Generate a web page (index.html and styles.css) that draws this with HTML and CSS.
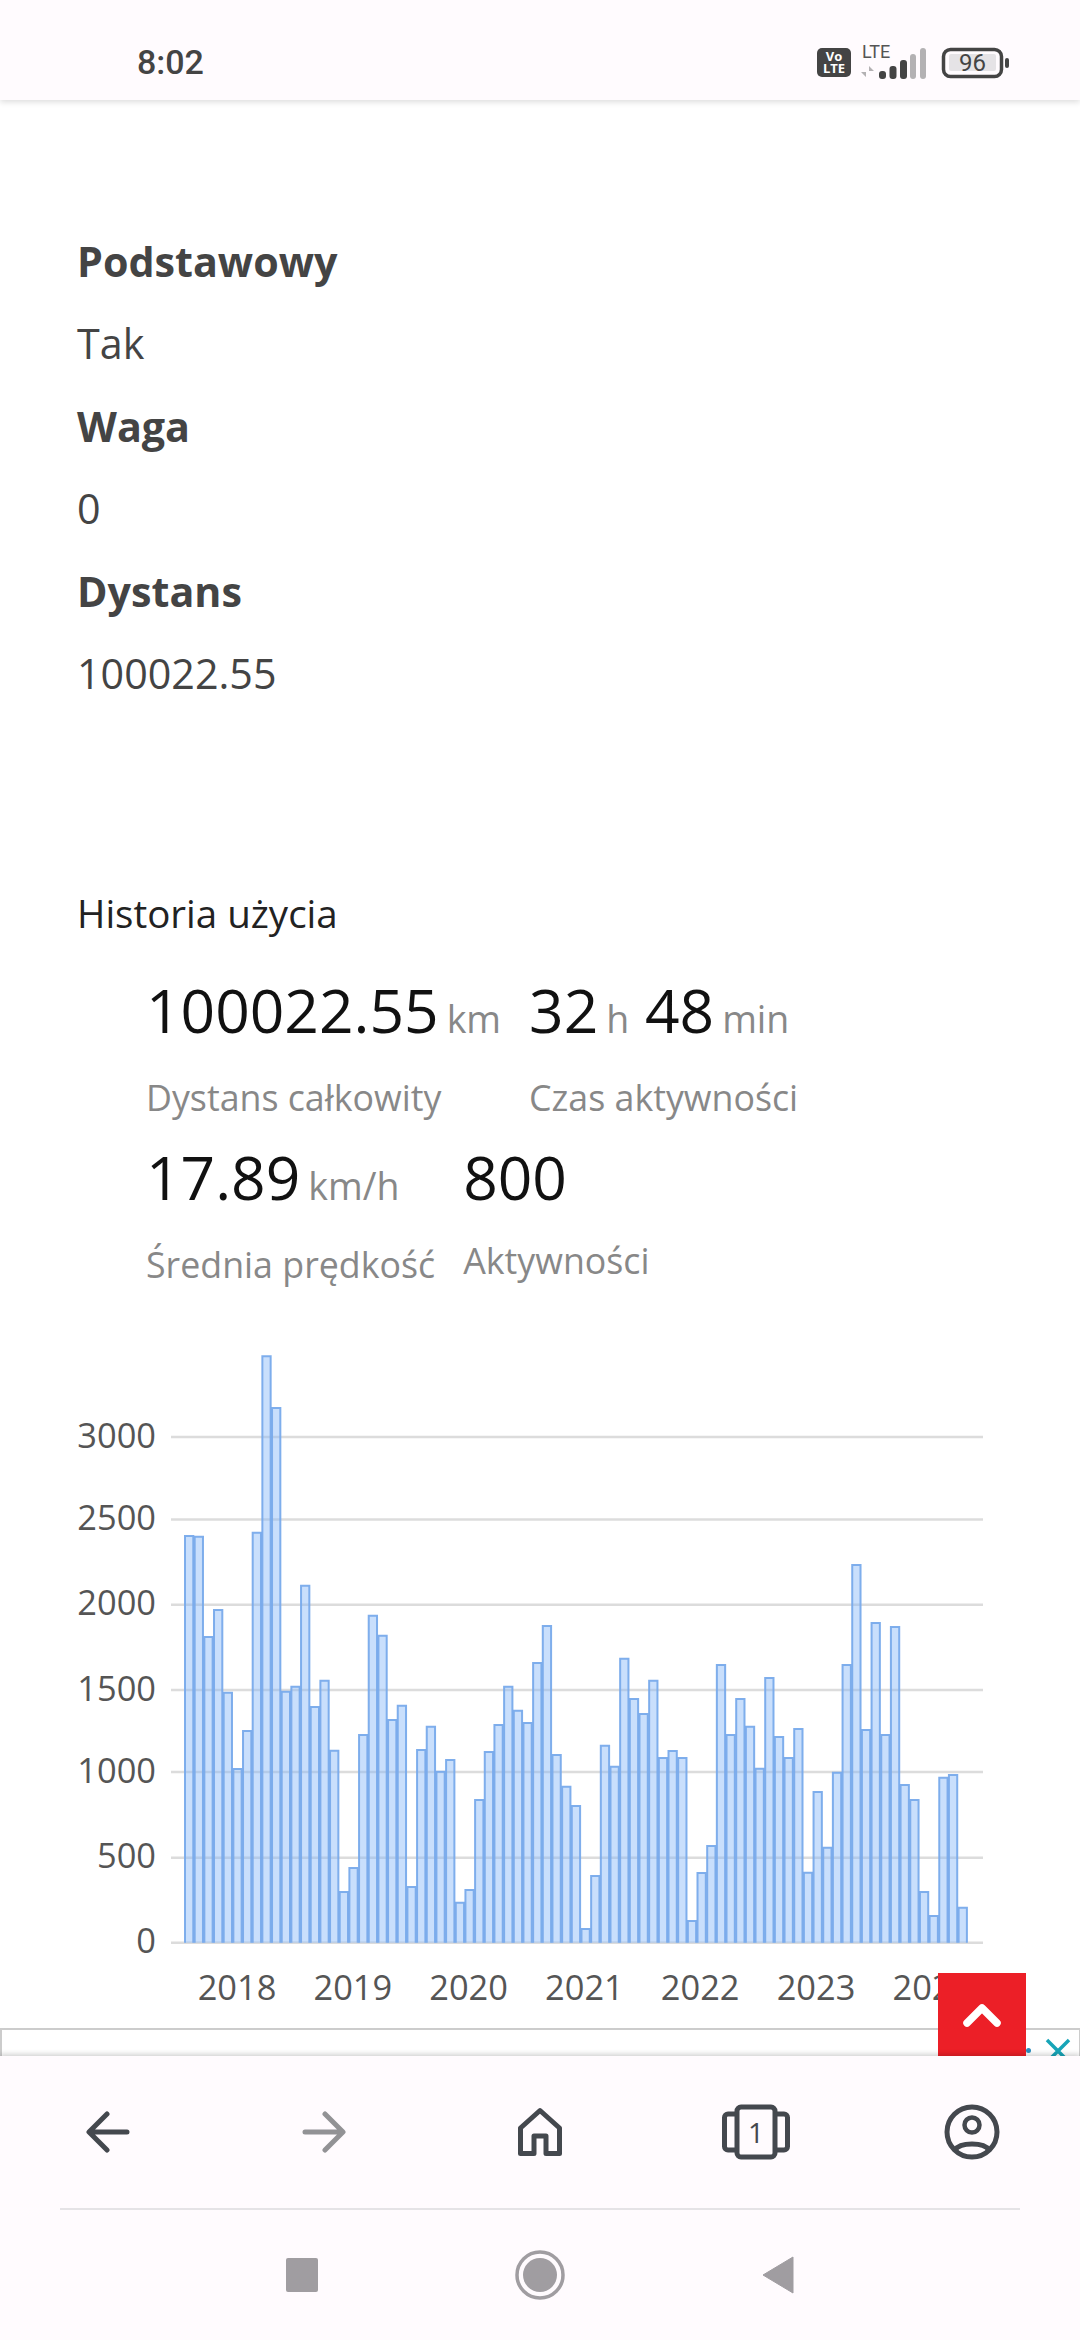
FILE: index.html
```html
<!DOCTYPE html>
<html lang="pl">
<head>
  <meta charset="UTF-8">
  <meta name="viewport" content="width=device-width, initial-scale=1.0">
  <title>Historia użycia</title>
  <link rel="stylesheet" href="styles.css">
</head>
<body>
  <div class="screen">
    <header class="statusbar">
      <span class="clock">8:02</span>
      <svg class="status-icons" width="206" height="42" viewBox="0 -6 206 42">
        <rect x="0" y="2" width="34" height="29" rx="5" fill="#444"/>
        <text x="17" y="14.500" class="volte">Vo</text>
        <text x="17" y="27" class="volte">LTE</text>
        <text x="45" y="12" class="lte">LTE</text>
        <path d="M49 20v11l-5-5h5zM52 31V20l5 5h-5z" fill="#b3b1b3"/>
        <rect x="62" y="25" width="7" height="8" rx="3" fill="#444"/>
        <rect x="72.500" y="20" width="7" height="13" rx="3" fill="#444"/>
        <rect x="83" y="14" width="7" height="19" rx="3" fill="#444"/>
        <rect x="93" y="8" width="6" height="25" rx="3" fill="#b3b1b3"/>
        <rect x="103" y="2" width="6" height="31" rx="3" fill="#b3b1b3"/>
        <rect x="126.500" y="3.500" width="58" height="27" rx="7" fill="none" stroke="#444" stroke-width="3.500"/>
        <rect x="132" y="8" width="47" height="17" rx="2" fill="#e5e3e6"/>
        <text x="155.500" y="25" class="batt">96</text>
        <rect x="188" y="12" width="4" height="10" rx="2" fill="#444"/>
      </svg>
    </header>

    <main class="content">
      <dl class="details">
        <dt>Podstawowy</dt>
        <dd>Tak</dd>
        <dt>Waga</dt>
        <dd>0</dd>
        <dt>Dystans</dt>
        <dd>100022.55</dd>
      </dl>

      <h2 class="section-title">Historia użycia</h2>

      <div class="stats">
        <div class="stat">
          <div class="stat-value">100022.55<small>km</small></div>
          <div class="stat-label">Dystans całkowity</div>
        </div>
        <div class="stat">
          <div class="stat-value">32<small>h</small> 48<small>min</small></div>
          <div class="stat-label">Czas aktywności</div>
        </div>
        <div class="stat">
          <div class="stat-value">17.89<small>km/h</small></div>
          <div class="stat-label">Średnia prędkość</div>
        </div>
        <div class="stat stat-plain">
          <div class="stat-value">800</div>
          <div class="stat-label">Aktywności</div>
        </div>
      </div>

      <svg id="chart" class="chart" width="1080" height="680" viewBox="0 1340 1080 680"></svg>

      <div class="ad-banner">
        <span class="ad-dot"></span>
        <svg class="ad-close" width="26" height="26" viewBox="0 0 26 26">
          <path d="M2 2l22 22M24 2L2 24" stroke="#17a5b8" stroke-width="3.500" fill="none"/>
        </svg>
      </div>

      <button class="to-top" aria-label="Do góry">
        <svg width="44" height="30" viewBox="0 0 44 30">
          <path d="M7 22L22 7l15 15" stroke="#fff" stroke-width="7.500" stroke-linecap="round" stroke-linejoin="round" fill="none"/>
        </svg>
      </button>
    </main>

    <footer class="bottom">
      <nav class="toolbar">
        <div class="tool">
          <svg width="44" height="42" viewBox="0 0 44 42">
            <path d="M41 21H4M21 3L3 21l18 18" stroke="#44484e" stroke-width="5" stroke-linecap="round" stroke-linejoin="round" fill="none"/>
          </svg>
        </div>
        <div class="tool">
          <svg width="44" height="42" viewBox="0 0 44 42">
            <path d="M3 21h37M23 3l18 18-18 18" stroke="#929295" stroke-width="5" stroke-linecap="round" stroke-linejoin="round" fill="none"/>
          </svg>
        </div>
        <div class="tool">
          <svg width="46" height="50" viewBox="0 0 46 50">
            <path d="M3.500 21L23 3.500 42.500 21v25.500H29V29H17v17.500H3.500z" stroke="#44484e" stroke-width="5" stroke-linejoin="round" fill="none"/>
          </svg>
        </div>
        <div class="tool">
          <svg width="68" height="56" viewBox="0 0 68 56">
            <rect x="15" y="3" width="38" height="50" rx="4" stroke="#44484e" stroke-width="5" fill="none"/>
            <path d="M15 10H6a3.500 3.500 0 0 0-3.500 3.500v29A3.500 3.500 0 0 0 6 46h9M53 10h9a3.500 3.500 0 0 1 3.500 3.500v29A3.500 3.500 0 0 1 62 46h-9" stroke="#44484e" stroke-width="5" fill="none"/>
            <text x="34" y="39" class="tab-count">1</text>
          </svg>
        </div>
        <div class="tool">
          <svg width="56" height="56" viewBox="0 0 56 56">
            <circle cx="28" cy="28" r="25" stroke="#44484e" stroke-width="5" fill="none"/>
            <circle cx="28" cy="21" r="7.500" stroke="#44484e" stroke-width="4.500" fill="none"/>
            <path d="M11 46c5-8 29-8 34 0" stroke="#44484e" stroke-width="5" fill="none"/>
          </svg>
        </div>
      </nav>
      <div class="sysnav">
        <svg width="32" height="34" viewBox="0 0 32 34"><rect width="32" height="34" rx="2" fill="#a09da1"/></svg>
        <svg width="50" height="50" viewBox="0 0 50 50">
          <circle cx="25" cy="25" r="23" stroke="#a09da1" stroke-width="3.500" fill="none"/>
          <circle cx="25" cy="25" r="17" fill="#a09da1"/>
        </svg>
        <svg width="32" height="38" viewBox="0 0 32 38"><path d="M31 1v36L1 19z" fill="#a09da1" stroke="#a09da1" stroke-linejoin="round"/></svg>
      </div>
    </footer>
  </div>
  <script src="script.js"></script>
</body>
</html>
```

FILE: styles.css
```css
* {
  box-sizing: border-box;
}
html, body {
  margin: 0;
  padding: 0;
}
body {
  font-family: 'Open Sans', 'Liberation Sans', sans-serif;
  background: #fff;
}
.screen {
  width: 1080px;
  height: 2340px;
  display: flex;
  flex-direction: column;
  overflow: hidden;
}

.statusbar {
  height: 100px;
  flex: none;
  display: flex;
  align-items: center;
  justify-content: space-between;
  padding: 24px 57px 0 137px;
  background: #fffbfe;
  box-shadow: 0 2px 6px rgba(0, 0, 0, 0.14);
  position: relative;
  z-index: 2;
}
.clock {
  font-family: Roboto, sans-serif;
  font-weight: 500;
  font-size: 34px;
  color: #444;
}
.status-icons {
  margin-top: -2px;
}
.volte {
  font: 700 13px 'Open Sans', sans-serif;
  fill: #fff;
  text-anchor: middle;
}
.lte {
  font: 400 18px Roboto, sans-serif;
  fill: #555;
}
.batt {
  font: 400 24px Roboto, sans-serif;
  fill: #444;
  text-anchor: middle;
}
.tab-count {
  font: 400 28px 'Open Sans', sans-serif;
  fill: #44484e;
  text-anchor: middle;
}

.content {
  flex: 1;
  position: relative;
  overflow: hidden;
  padding-top: 119.500px;
}
.details {
  margin: 0 0 0 77px;
  font-size: 41.250px;
  line-height: 82.500px;
  color: #444;
}
.details dt {
  font-weight: 700;
}
.details dd {
  margin: 0;
}
.section-title {
  margin: 157px 0 0 77px;
  font-size: 38.500px;
  line-height: 82px;
  font-weight: 400;
  color: #222;
}

.stats {
  display: flex;
  flex-wrap: wrap;
  column-gap: 28px;
  margin-left: 146px;
  height: 386px;
  align-content: flex-start;
}
.stat {
  height: 167px;
}
.stat-value {
  font-size: 60.500px;
  line-height: 92px;
  padding-top: 10px;
  color: #111;
  white-space: nowrap;
}
.stat-value small {
  font-size: 37.500px;
  color: #888;
  margin-left: 8px;
}
.stat-label {
  font-size: 35.750px;
  line-height: 56px;
  margin-top: 4px;
  color: #888;
  white-space: nowrap;
}
.stat-plain .stat-label {
  margin-top: 9px;
}

.chart {
  display: block;
  position: absolute;
  left: 0;
  top: 1240px;
}
.grid-line {
  stroke: #dcdcdc;
  stroke-width: 2.500;
}
.axis-text {
  font: 400 34.400px 'Open Sans', sans-serif;
  fill: #555;
}
.axis-y {
  text-anchor: end;
}
.axis-x {
  text-anchor: middle;
}
.bar {
  fill: rgba(127, 178, 247, 0.42);
  stroke: rgba(120, 170, 235, 0.95);
  stroke-width: 2;
}

.ad-banner {
  position: absolute;
  left: 0;
  right: 0;
  top: 1928px;
  height: 60px;
  border: 2px solid #ccc;
  border-right-width: 1px;
  background: #fff;
}
.ad-dot {
  position: absolute;
  left: 1024px;
  top: 18px;
  width: 5px;
  height: 5px;
  border-radius: 50%;
  background: #2a8fc0;
}
.ad-close {
  position: absolute;
  right: 8px;
  top: 8px;
}
.to-top {
  position: absolute;
  left: 938px;
  top: 1873px;
  width: 88px;
  height: 83px;
  padding: 2px 0 0;
  border: none;
  background: #ec1f27;
  display: flex;
  align-items: center;
  justify-content: center;
}

.bottom {
  height: 284px;
  flex: none;
  background: #fffbfe;
  box-shadow: 0 -2px 5px rgba(0, 0, 0, 0.18);
  position: relative;
  z-index: 2;
}
.toolbar {
  height: 154px;
  margin: 0 60px;
  border-bottom: 2px solid #e5e3e6;
  display: grid;
  grid-template-columns: repeat(5, 216px);
  justify-content: center;
  align-items: center;
}
.tool {
  display: flex;
  justify-content: center;
}
.sysnav {
  height: 130px;
  display: grid;
  grid-template-columns: repeat(3, 238px);
  justify-content: center;
  justify-items: center;
  align-items: center;
}
```

FILE: script.js
```js
var km = [
  2412, 2408, 1813, 1973, 1483, 1030, 1255, 2431, 3479, 3171, 1488, 1518,
  2117, 1398, 1554, 1139, 301, 443, 1232, 1939, 1821, 1321, 1405, 330,
  1143, 1281, 1014, 1083, 237, 313, 846, 1131, 1291, 1518, 1376, 1303,
  1659, 1878, 1113, 925, 811, 81, 396, 1168, 1044, 1684, 1445, 1356,
  1554, 1095, 1137, 1095, 129, 413, 573, 1647, 1232, 1445, 1281, 1032,
  1570, 1220, 1095, 1267, 415, 894, 563, 1008, 1647, 2240, 1261, 1896,
  1232, 1872, 935, 846, 301, 158, 978, 994, 207
];
var years = ['2018', '2019', '2020', '2021', '2022', '2023', '2024'];
var ticks = [
  [0, 1942.7], [500, 1857.7], [1000, 1772], [1500, 1690],
  [2000, 1604.7], [2500, 1519.5], [3000, 1437]
];

var svg = document.getElementById('chart');
var ns = 'http://www.w3.org/2000/svg';
var base = 1942.7;
var scale = 84.3 / 500;

function add(tag, attrs, text) {
  var el = document.createElementNS(ns, tag);
  for (var k in attrs) el.setAttribute(k, attrs[k]);
  if (text) el.textContent = text;
  svg.appendChild(el);
}

ticks.forEach(function (t) {
  add('line', { x1: 171, x2: 983, y1: t[1], y2: t[1], 'class': 'grid-line' });
  add('text', { x: 156, y: t[1] + 10.5, 'class': 'axis-text axis-y' }, String(t[0]));
});

years.forEach(function (year, i) {
  add('text', { x: 237 + i * 115.8, y: 2000, 'class': 'axis-text axis-x' }, year);
});

km.forEach(function (val, i) {
  var x = 185 + i * 9.67;
  var top = base - val * scale;
  add('path', { d: 'M' + x + ' ' + base + 'V' + top + 'H' + (x + 8.3) + 'V' + base, 'class': 'bar' });
});
```
